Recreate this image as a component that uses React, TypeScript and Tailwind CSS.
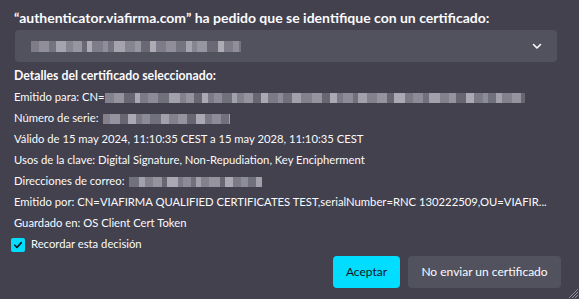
import React from 'react';

// pixelated "redacted" blocks, shades picked to look like the mosaic blur
const mosaic = (seed: number, count: number) => {
  const shades = ['#8e8d99', '#a3a2ad', '#7a7986', '#b3b2bc', '#858490', '#9a99a4', '#6e6d79', '#bdbcc5'];
  const out: { w: number; c: string }[] = [];
  let s = seed;
  for (let i = 0; i < count; i++) {
    s = (s * 9301 + 49297) % 233280;
    const w = 5 + (s % 7);
    out.push({ w, c: shades[s % shades.length] });
  }
  return out;
};

const Redacted = ({ width, seed, h = 10 }: { width: number; seed: number; h?: number }) => {
  const blocks = mosaic(seed, 80);
  let total = 0;
  const items: { w: number; c: string }[] = [];
  for (const b of blocks) {
    if (total >= width) break;
    const w = Math.min(b.w, width - total);
    items.push({ w, c: b.c });
    total += w;
  }
  return (
    <span className="inline-flex align-middle opacity-85" style={{ height: h }}>
      {items.map((b, i) => (
        <span key={i} style={{ width: b.w, background: b.c }} className="h-full" />
      ))}
    </span>
  );
};

const Row = ({ children }: { children: React.ReactNode }) => (
  <div className="h-[21px] flex items-center whitespace-nowrap">{children}</div>
);

export default function App() {
  return (
    <div
      className="w-[579px] h-[299px] bg-[#42414d] text-[#fbfbfe] text-[11.25px] relative overflow-hidden"
      style={{ fontFamily: 'Lato, "Noto Sans", sans-serif' }}
    >
      <div className="px-[14px] pt-[7px]">
        <div className="font-bold text-[14px] h-[20px] flex items-center">
          “authenticator.viafirma.com” ha pedido que se identifique con un certificado:
        </div>
        <div className="mt-[3px] ml-px w-[542px] h-[32px] rounded-[4px] bg-[#52525e] flex items-center justify-between pl-[16px] pr-[14px]">
          <Redacted width={210} seed={7} h={11} />
          <svg width="12" height="12" viewBox="0 0 12 12" fill="none">
            <path d="M2.5 4.5 6 8l3.5-3.5" stroke="#fbfbfe" strokeWidth="1.6" strokeLinecap="round" strokeLinejoin="round" />
          </svg>
        </div>
        <div className="font-bold text-[12.25px] mt-[4px] h-[21px] flex items-center">Detalles del certificado seleccionado:</div>
        <Row>
          <span>Emitido para: CN=</span>
          <Redacted width={420} seed={3} />
        </Row>
        <Row>
          <span className="mr-[4px]">Número de serie:</span>
          <Redacted width={127} seed={11} />
        </Row>
        <Row>Válido de 15 may 2024, 11:10:35 CEST a 15 may 2028, 11:10:35 CEST</Row>
        <Row>Usos de la clave: Digital Signature, Non-Repudiation, Key Encipherment</Row>
        <Row>
          <span className="mr-[4px]">Direcciones de correo:</span>
          <Redacted width={133} seed={21} />
        </Row>
        <Row>Emitido por: CN=VIAFIRMA QUALIFIED CERTIFICATES TEST,serialNumber=RNC 130222509,OU=VIAFIR...</Row>
        <Row>Guardado en: OS Client Cert Token</Row>
        <div className="flex items-center h-[21px] -ml-[3px] gap-[6px]">
          <span className="w-[14px] h-[14px] rounded-[2px] bg-[#00ddff] flex items-center justify-center">
            <svg width="10" height="10" viewBox="0 0 10 10" fill="none">
              <path d="M1.8 5.2 4 7.4 8.3 2.6" stroke="#15141a" strokeWidth="1.6" strokeLinecap="round" strokeLinejoin="round" />
            </svg>
          </span>
          <span>Recordar esta decisión</span>
        </div>
        <div className="flex justify-end gap-[8px] mt-[1px] pr-[4px]">
          <button className="h-[32px] w-[67px] rounded-[4px] bg-[#00ddff] text-[#15141a] text-[12px]">Aceptar</button>
          <button className="h-[32px] w-[153px] rounded-[4px] bg-[#52525e] text-[#fbfbfe] text-[12px]">No enviar un certificado</button>
        </div>
      </div>
      <svg className="absolute right-0 bottom-0" width="12" height="12" viewBox="0 0 12 12">
        <path d="M11 2 2 11M11 5 5 11M11 8 8 11" stroke="#8f8f9d" strokeWidth="1" />
      </svg>
    </div>
  );
}
